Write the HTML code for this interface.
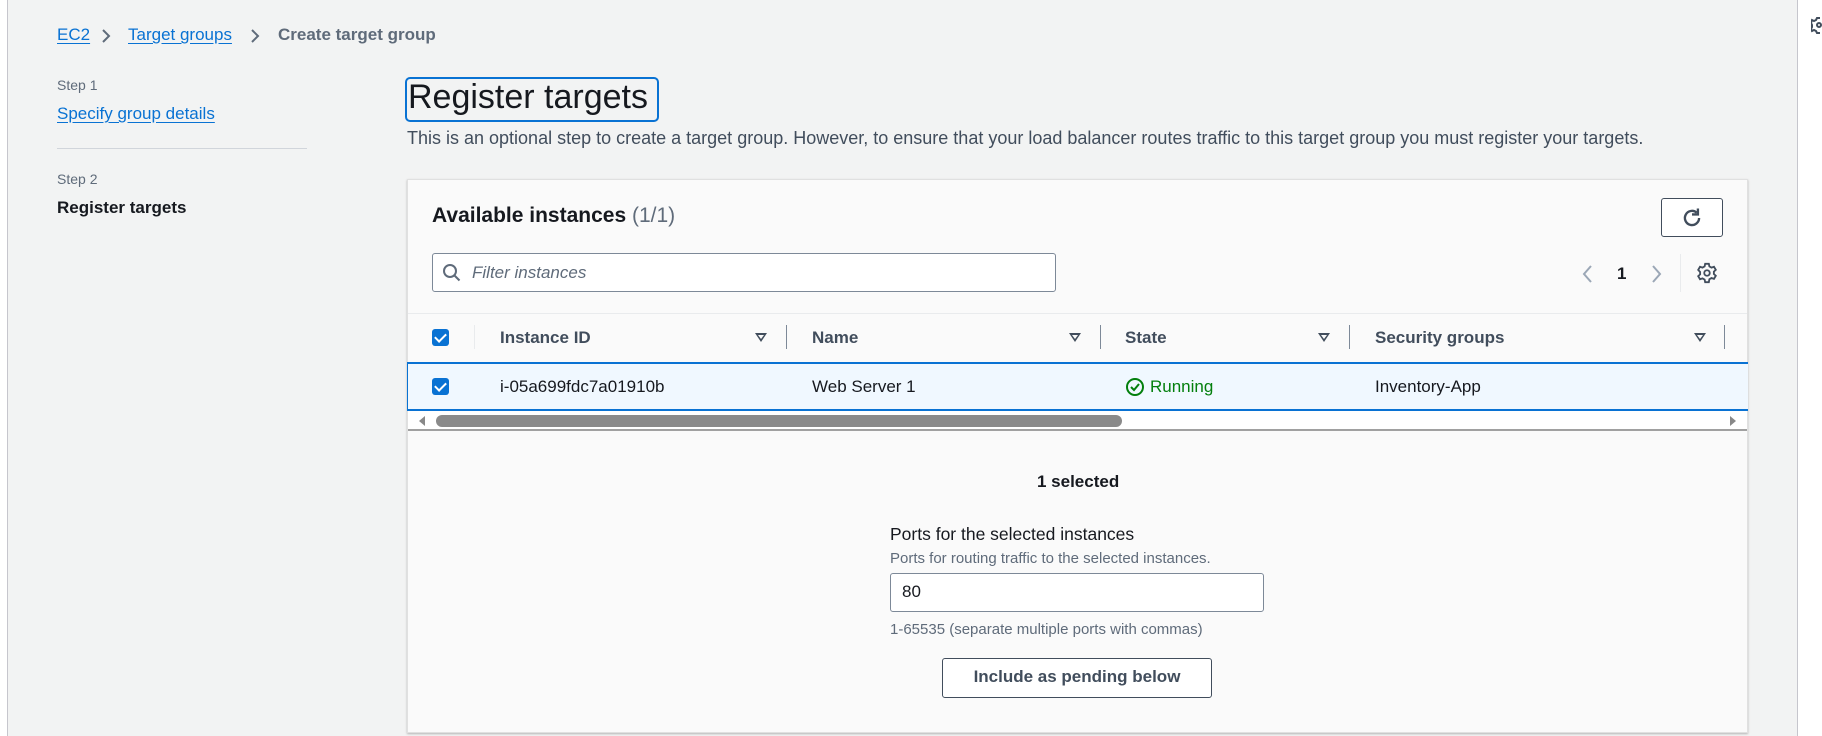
<!DOCTYPE html>
<html><head><meta charset="utf-8"><style>
*{box-sizing:border-box;margin:0;padding:0}
body{width:1822px;height:736px;overflow:hidden;background:#fff;font-family:"Liberation Sans",sans-serif;color:#16191f;position:relative}
.main{position:absolute;left:7px;top:0;width:1791px;height:736px;background:#f2f3f3;border-left:1px solid #c6c6cd;border-right:1px solid #c6c6cd}
.a{position:absolute;white-space:nowrap}
.link{color:#0972d3;text-decoration:underline;text-underline-offset:3px}
.panel{position:absolute;left:407px;top:179px;width:1341px;height:554px;background:#fafafa;border:1px solid #e0e0e0;box-shadow:0 1px 2px rgba(0,0,0,.25)}
.hdr{font-weight:bold;color:#414d5c;font-size:17px}
.sep{position:absolute;width:1px;height:24px;background:#7d8998;top:325px}
.cb{position:absolute;width:17px;height:17px;background:#0972d3;border-radius:3px}
.cb:after{content:"";position:absolute;left:5px;top:2px;width:5px;height:9px;border:solid #fff;border-width:0 2px 2px 0;transform:rotate(45deg)}
.tri{position:absolute;width:0;height:0;border-left:6px solid transparent;border-right:6px solid transparent;border-top:9px solid #414d5c;top:333px}
.tri:after{content:"";position:absolute;left:-3px;top:-7px;border-left:3px solid transparent;border-right:3px solid transparent;border-top:4px solid #fafafa}
</style></head><body>
<div class="main"></div>
<div class="a" style="left:57px;top:25px;font-size:17px"><span class="link">EC2</span></div>
<svg class="a" style="left:100px;top:28px" width="12" height="16"><path d="M3 2l6 6-6 6" stroke="#5f6b7a" stroke-width="2" fill="none"/></svg>
<div class="a link" style="left:128px;top:25px;font-size:17px">Target groups</div>
<svg class="a" style="left:249px;top:28px" width="12" height="16"><path d="M3 2l6 6-6 6" stroke="#5f6b7a" stroke-width="2" fill="none"/></svg>
<div class="a" style="left:278px;top:25px;font-size:17px;font-weight:bold;color:#5f6b7a">Create target group</div>

<div class="a" style="left:57px;top:77px;font-size:14px;color:#5f6b7a">Step 1</div>
<div class="a link" style="left:57px;top:104px;font-size:17px">Specify group details</div>
<div class="a" style="left:57px;top:148px;width:250px;height:1px;background:#d1d5db"></div>
<div class="a" style="left:57px;top:171px;font-size:14px;color:#5f6b7a">Step 2</div>
<div class="a" style="left:57px;top:198px;font-size:17px;font-weight:bold">Register targets</div>

<div class="a" style="left:405px;top:77px;width:254px;border:2px solid #0972d3;border-radius:5px;height:45px"></div>
<div class="a" style="left:408px;top:78px;font-size:34px">Register targets</div>
<div class="a" style="left:407px;top:128px;font-size:18px;color:#414d5c">This is an optional step to create a target group. However, to ensure that your load balancer routes traffic to this target group you must register your targets.</div>

<div class="panel"></div>
<div class="a" style="left:432px;top:204px;font-size:21px;font-weight:bold">Available instances <span style="font-weight:normal;color:#5f6b7a">(1/1)</span></div>
<div class="a" style="left:1661px;top:198px;width:62px;height:39px;border:1px solid #414d5c;border-radius:3px;background:#fff"></div>
<svg class="a" style="left:1679px;top:205px" width="26" height="26" viewBox="0 0 22 22"><path d="M17 11a6 6 0 1 1-2-4.5" stroke="#414d5c" stroke-width="2" fill="none"/><path d="M16 3v5h-5" stroke="#414d5c" stroke-width="2" fill="none"/></svg>
<div class="a" style="left:432px;top:253px;width:624px;height:39px;border:1px solid #7d8998;border-radius:3px;background:#fff"></div>
<svg class="a" style="left:442px;top:263px" width="20" height="20"><circle cx="8" cy="8" r="6" stroke="#5f6b7a" stroke-width="2" fill="none"/><path d="M12.5 12.5l5 5" stroke="#5f6b7a" stroke-width="2"/></svg>
<div class="a" style="left:472px;top:263px;font-size:17px;font-style:italic;color:#5f6b7a">Filter instances</div>
<svg class="a" style="left:1580px;top:263px" width="16" height="22"><path d="M11 3l-7 8 7 8" stroke="#9ba7b6" stroke-width="2" fill="none"/></svg>
<div class="a" style="left:1617px;top:264px;font-size:17px;font-weight:bold">1</div>
<svg class="a" style="left:1648px;top:263px" width="16" height="22"><path d="M5 3l7 8-7 8" stroke="#9ba7b6" stroke-width="2" fill="none"/></svg>
<div class="a" style="left:1680px;top:254px;width:1px;height:38px;background:#e9ebed"></div>
<svg class="a" style="left:1696px;top:262px" width="22" height="22" viewBox="0 0 24 24"><path d="M10 2h4l.6 2.8 2.3 1.3 2.7-.9 2 3.4-2.1 1.9v2.6l2.1 1.9-2 3.4-2.7-.9-2.3 1.3L14 22h-4l-.6-2.8-2.3-1.3-2.7.9-2-3.4 2.1-1.9v-2.6L2.4 8.6l2-3.4 2.7.9 2.3-1.3z" stroke="#414d5c" stroke-width="2" fill="none"/><circle cx="12" cy="12" r="3" stroke="#414d5c" stroke-width="2" fill="none"/></svg>

<div class="a" style="left:408px;top:313px;width:1339px;height:1px;background:#e9ebed"></div>
<div class="cb" style="left:432px;top:329px"></div>
<div class="a" style="left:474px;top:325px;width:1px;height:24px;background:#e9ebed"></div>
<div class="a hdr" style="left:500px;top:328px">Instance ID</div>
<div class="tri" style="left:755px"></div><div class="sep" style="left:786px"></div>
<div class="a hdr" style="left:812px;top:328px">Name</div>
<div class="tri" style="left:1069px"></div><div class="sep" style="left:1100px"></div>
<div class="a hdr" style="left:1125px;top:328px">State</div>
<div class="tri" style="left:1318px"></div><div class="sep" style="left:1349px"></div>
<div class="a hdr" style="left:1375px;top:328px">Security groups</div>
<div class="tri" style="left:1694px"></div><div class="sep" style="left:1724px"></div>

<div class="a" style="left:407px;top:362px;width:1341px;height:49px;background:#f0f8ff;border:2px solid #0972d3;border-width:2px 0 2px 1px"></div>
<div class="cb" style="left:432px;top:378px"></div>
<div class="a" style="left:500px;top:377px;font-size:17px">i-05a699fdc7a01910b</div>
<div class="a" style="left:812px;top:377px;font-size:17px">Web Server 1</div>
<svg class="a" style="left:1125px;top:377px" width="20" height="20"><circle cx="10" cy="10" r="8" stroke="#037f0c" stroke-width="2" fill="none"/><path d="M6 10l3 3 5-6" stroke="#037f0c" stroke-width="2" fill="none"/></svg>
<div class="a" style="left:1150px;top:377px;font-size:17px;color:#037f0c">Running</div>
<div class="a" style="left:1375px;top:377px;font-size:17px">Inventory-App</div>

<div class="a" style="left:408px;top:411px;width:1339px;height:20px;background:#fff;border-bottom:2px solid #a0a0a0"></div>
<svg class="a" style="left:417px;top:414px" width="10" height="14"><path d="M8 2v10L2 7z" fill="#888"/></svg>
<div class="a" style="left:436px;top:415px;width:686px;height:12px;border-radius:6px;background:#8a8a8a"></div>
<svg class="a" style="left:1728px;top:414px" width="10" height="14"><path d="M2 2v10l6-5z" fill="#888"/></svg>

<div class="a" style="left:1037px;top:472px;font-size:17px;font-weight:bold">1 selected</div>
<div class="a" style="left:890px;top:524px;font-size:17.5px">Ports for the selected instances</div>
<div class="a" style="left:890px;top:550px;font-size:15px;color:#5f6b7a">Ports for routing traffic to the selected instances.</div>
<div class="a" style="left:890px;top:573px;width:374px;height:39px;border:1px solid #7d8998;border-radius:3px;background:#fff"></div>
<div class="a" style="left:902px;top:582px;font-size:17px">80</div>
<div class="a" style="left:890px;top:621px;font-size:15px;color:#5f6b7a">1-65535 (separate multiple ports with commas)</div>
<div class="a" style="left:942px;top:658px;width:270px;height:40px;border:1px solid #414d5c;border-radius:3px;background:#fff"></div>
<div class="a" style="left:942px;top:667px;width:270px;text-align:center;font-size:17px;font-weight:bold;color:#414d5c">Include as pending below</div>

<svg class="a" style="left:1811px;top:16px" width="14" height="18"><path d="M9 2h-3l-1 2-2 1-2-1L0 7l1 2v2l-1 2 1 2 2-1 2 1 1 2h3" stroke="#414d5c" stroke-width="2" fill="none"/><circle cx="8" cy="9" r="2" stroke="#414d5c" stroke-width="2" fill="none"/></svg>
</body></html>
